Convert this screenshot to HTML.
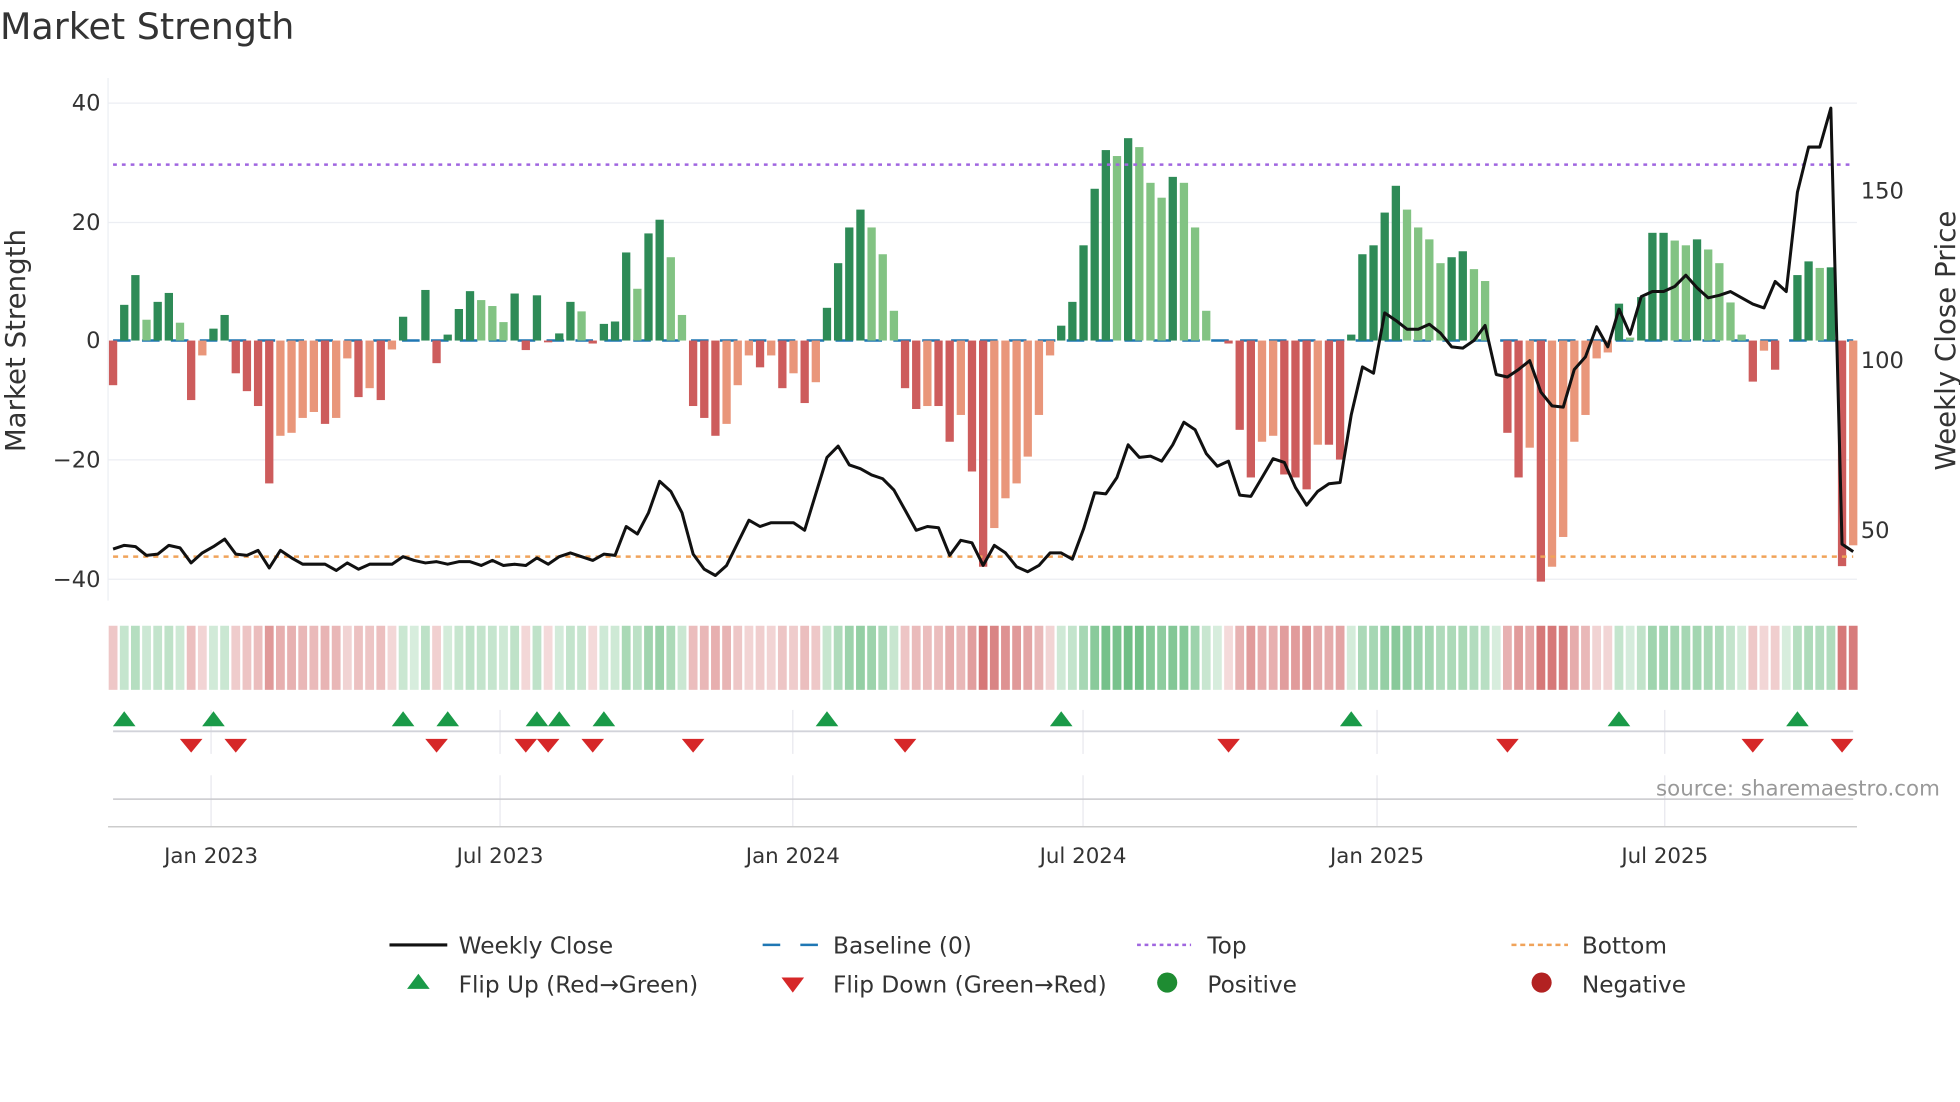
<!DOCTYPE html>
<html><head><meta charset="utf-8">
<style>
html,body{margin:0;padding:0;background:#fff;}
svg{display:block;font-family:"DejaVu Sans","Liberation Sans",sans-serif;}
</style></head>
<body>
<svg id="c" width="1960" height="1102" viewBox="0 0 1560 877" xmlns="http://www.w3.org/2000/svg">
<rect width="1560" height="877" fill="#fff"/>
<text x="0" y="31" font-size="29" fill="#333">Market Strength</text>
<g stroke="#eceef3" stroke-width="1">
<line x1="86" y1="82" x2="1478" y2="82"/><line x1="86" y1="177" x2="1478" y2="177"/>
<line x1="86" y1="366" x2="1478" y2="366"/><line x1="86" y1="461" x2="1478" y2="461"/>
<line x1="86" y1="62" x2="86" y2="478"/>
</g>
<g font-size="18" fill="#333" text-anchor="end">
<text x="80" y="88">40</text><text x="80" y="183">20</text><text x="80" y="277">0</text>
<text x="80" y="372">−20</text><text x="80" y="467">−40</text>
</g>
<g font-size="18" fill="#333">
<text x="1481" y="158">150</text><text x="1481" y="293">100</text><text x="1481" y="428">50</text>
</g>
<text transform="translate(20,271) rotate(-90)" font-size="22" fill="#333" text-anchor="middle">Market Strength</text>
<text transform="translate(1556,271) rotate(-90)" font-size="22" fill="#333" text-anchor="middle">Weekly Close Price</text>
<line x1="90" y1="271" x2="1475" y2="271" stroke="#1f77b4" stroke-width="2" stroke-dasharray="14,9"/>
<g id="bars"></g>
<line x1="90" y1="131" x2="1475" y2="131" stroke="#a066e0" stroke-width="2" stroke-dasharray="3,4"/>
<line x1="90" y1="443" x2="1475" y2="443" stroke="#f0a35a" stroke-width="2" stroke-dasharray="4,4"/>
<polyline id="price" fill="none" stroke="#111" stroke-width="2.4" stroke-linejoin="round"/>
<g id="heat"></g>
<g stroke="#e8e8ee" stroke-width="1">
<line x1="168" y1="565" x2="168" y2="600"/><line x1="398" y1="565" x2="398" y2="600"/><line x1="631" y1="565" x2="631" y2="600"/><line x1="862" y1="565" x2="862" y2="600"/><line x1="1096" y1="565" x2="1096" y2="600"/><line x1="1325" y1="565" x2="1325" y2="600"/>
<line x1="168" y1="617" x2="168" y2="658"/><line x1="398" y1="617" x2="398" y2="658"/><line x1="631" y1="617" x2="631" y2="658"/><line x1="862" y1="617" x2="862" y2="658"/><line x1="1096" y1="617" x2="1096" y2="658"/><line x1="1325" y1="617" x2="1325" y2="658"/>
</g>
<line x1="90" y1="582" x2="1475" y2="582" stroke="#d2d3da" stroke-width="1.5"/>
<line x1="90" y1="636" x2="1475" y2="636" stroke="#c8c8cc" stroke-width="1.2"/>
<line x1="86" y1="658" x2="1478" y2="658" stroke="#ccc" stroke-width="1.2"/>
<g id="flips"></g>
<text x="1544" y="633" font-size="17" fill="#999" text-anchor="end">source: sharemaestro.com</text>
<g font-size="17" fill="#333" text-anchor="middle">
<text x="168" y="687">Jan 2023</text><text x="398" y="687">Jul 2023</text><text x="631" y="687">Jan 2024</text>
<text x="862" y="687">Jul 2024</text><text x="1096" y="687">Jan 2025</text><text x="1325" y="687">Jul 2025</text>
</g>
<g font-size="18.5" fill="#333">
<line x1="310" y1="752" x2="356" y2="752" stroke="#111" stroke-width="2.5"/>
<text x="365" y="759">Weekly Close</text>
<line x1="607" y1="752" x2="651" y2="752" stroke="#1f77b4" stroke-width="2" stroke-dasharray="14,16"/>
<text x="663" y="759">Baseline (0)</text>
<line x1="905" y1="752" x2="948" y2="752" stroke="#a066e0" stroke-width="2" stroke-dasharray="3,3"/>
<text x="961" y="759">Top</text>
<line x1="1203" y1="752" x2="1248" y2="752" stroke="#f0a35a" stroke-width="2" stroke-dasharray="4,3"/>
<text x="1259" y="759">Bottom</text>
<polygon points="324,787 342,787 333,775" fill="#1a9a48"/>
<text x="365" y="790">Flip Up (Red→Green)</text>
<polygon points="622,778 640,778 631,790" fill="#d62728"/>
<text x="663" y="790">Flip Down (Green→Red)</text>
<circle cx="929" cy="782" r="8" fill="#1e8c32"/>
<text x="961" y="790">Positive</text>
<circle cx="1227" cy="782" r="8" fill="#b22222"/>
<text x="1259" y="790">Negative</text>
</g>
</svg>
<script>
var V=[-7.5,6,11,3.5,6.5,8,3,-10,-2.5,2,4.3,-5.5,-8.5,-11,-24,-16,-15.5,-13,-12,-14,-13,-3,-9.5,-8,-10,-1.5,4,0,8.5,-3.8,1,5.3,8.3,6.8,5.8,3.1,7.9,-1.6,7.6,-0.3,1.2,6.5,4.9,-0.5,2.8,3.2,14.8,8.7,18,20.3,14,4.3,
-11,-13,-16,-14,-7.5,-2.5,-4.5,-2.5,-8,-5.5,-10.5,-7,5.5,13,19,22,19,14.5,5,-8,-11.5,-11,-11,-17,-12.5,-22,-38,-31.5,-26.5,-24,-19.5,-12.5,-2.5,2.5,6.5,16,25.5,32,31,34,32.5,26.5,24,27.5,26.5,19,5,0,-0.5,
-15,-23,-17,-16,-22.5,-23,-25,-17.5,-17.5,-20,1,14.5,16,21.5,26,22,19,17,13,14,15,12,10,0,-15.5,-23,-18,-40.5,-38,-33,-17,-12.5,-3,-2,6.2,0.5,7.3,18.1,18.1,16.8,16,17,15.3,13,6.4,1,-6.9,-1.7,-4.9,0,11,13.3,12.2,12.3,-37.9,-34.4];
var P=[437,434,435,442,441,434,436,448,440,435,429,441,442,438,452,438,444,449,449,449,454,448,453,449,449,449,443,446,448,447,449,447,447,450,446,450,449,450,444,449,443,440,443,446,441,442,419,425,408,383,391,408,441,453,458,450,432,414,419,416,416,416,422,393,364,355,370,373,378,381,390,406,422,419,420,442,430,432,450,434,440,451,455,450,440,440,445,421,392,393,380,354,364,363,367,354,336,342,361,371,367,394,395,380,365,368,388,402,391,385,384,330,292,297,249,255,262,262,258,265,276,277,271,259,298,300,294,287,312,323,324,294,284,260,276,246,266,236,232,232,228,219,229,237,235,232,237,242,245,224,232,153,117,117,86,433,439];
var ns="http://www.w3.org/2000/svg",step=(1475-90)/156;
function el(t,a,p){var e=document.createElementNS(ns,t);for(var k in a)e.setAttribute(k,a[k]);p.appendChild(e);return e;}
var bars=document.getElementById('bars'),heat=document.getElementById('heat'),fl=document.getElementById('flips');
var prev=0,pts=[],lastSign=0;
for(var i=0;i<V.length;i++){
 var v=V[i],x=90+i*step,c;
 if(v>0)c=(v>=prev?'#2e8b57':'#82c383');else c=(v<=prev?'#cd5c5c':'#e9967a');
 if(v!==0){var h=Math.abs(v)*4.7375;el('rect',{x:x-3.3,y:v>0?271-h:271,width:6.6,height:h,fill:c},bars);}
 prev=v;
 var a=0.2+0.55*Math.min(Math.abs(v)/36,1);
 var hc=v>=0?'rgba(55,165,85,'+a+')':'rgba(200,75,75,'+a+')';
 el('rect',{x:x-3.5,y:498,width:7,height:51,fill:hc},heat);
 var s=v>0?1:(v<0?-1:0);
 if(s!==0){
  if(lastSign===-1&&s===1)el('polygon',{points:(x-9)+',578 '+(x+9)+',578 '+x+',566',fill:'#1a9a48'},fl);
  if(lastSign===1&&s===-1)el('polygon',{points:(x-9)+',588 '+(x+9)+',588 '+x+',599',fill:'#d62728'},fl);
  lastSign=s;
 }
 pts.push(x.toFixed(1)+','+P[i]);
}
document.getElementById('price').setAttribute('points',pts.join(' '));
</script>
</body></html>
